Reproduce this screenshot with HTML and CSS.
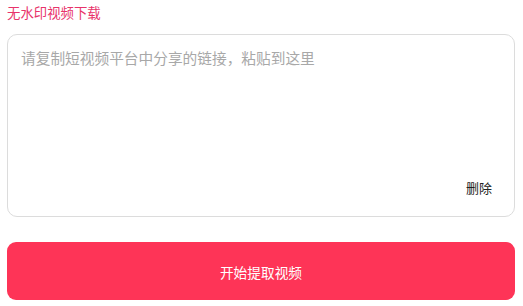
FILE: index.html
```html
<!DOCTYPE html>
<html lang="zh">
<head>
<meta charset="utf-8">
<link rel="stylesheet" href="styles.css">
</head>
<body>
<div class="page">
  <div class="title">无水印视频下载</div>
  <div class="box">
    <div class="placeholder">请复制短视频平台中分享的链接，粘贴到这里</div>
    <div class="actions"><span class="del">删除</span></div>
  </div>
  <button class="btn">开始提取视频</button>
</div>
</body>
</html>
```
FILE: styles.css
```css
html, body { margin: 0; padding: 0; background: #fff; }
body { font-family: "Noto Sans CJK SC", "Noto Sans", sans-serif; }
.page { padding: 0 8px 0 7px; display: flex; flex-direction: column; }
.title { color: #e8336a; font-size: 13.4px; line-height: 20px; margin-top: 2px; height: 20px; }
.box {
  margin-top: 12px;
  height: 183px;
  border: 1px solid #dcdcdc;
  border-radius: 10px;
  box-sizing: border-box;
  display: flex; flex-direction: column;
  padding: 12px 22px 19px 13px;
}
.placeholder { color: #a8a8a8; font-size: 14.7px; line-height: 22px; }
.actions { margin-top: auto; display: flex; justify-content: flex-end; }
.del { color: #222; font-size: 13px; line-height: 18px; }
.btn {
  margin-top: 25px;
  height: 58px;
  border: none;
  border-radius: 9px;
  background: #fe3457;
  color: #fff;
  font-family: inherit;
  font-size: 13.7px;
  padding: 2px 0 0;
}
```
